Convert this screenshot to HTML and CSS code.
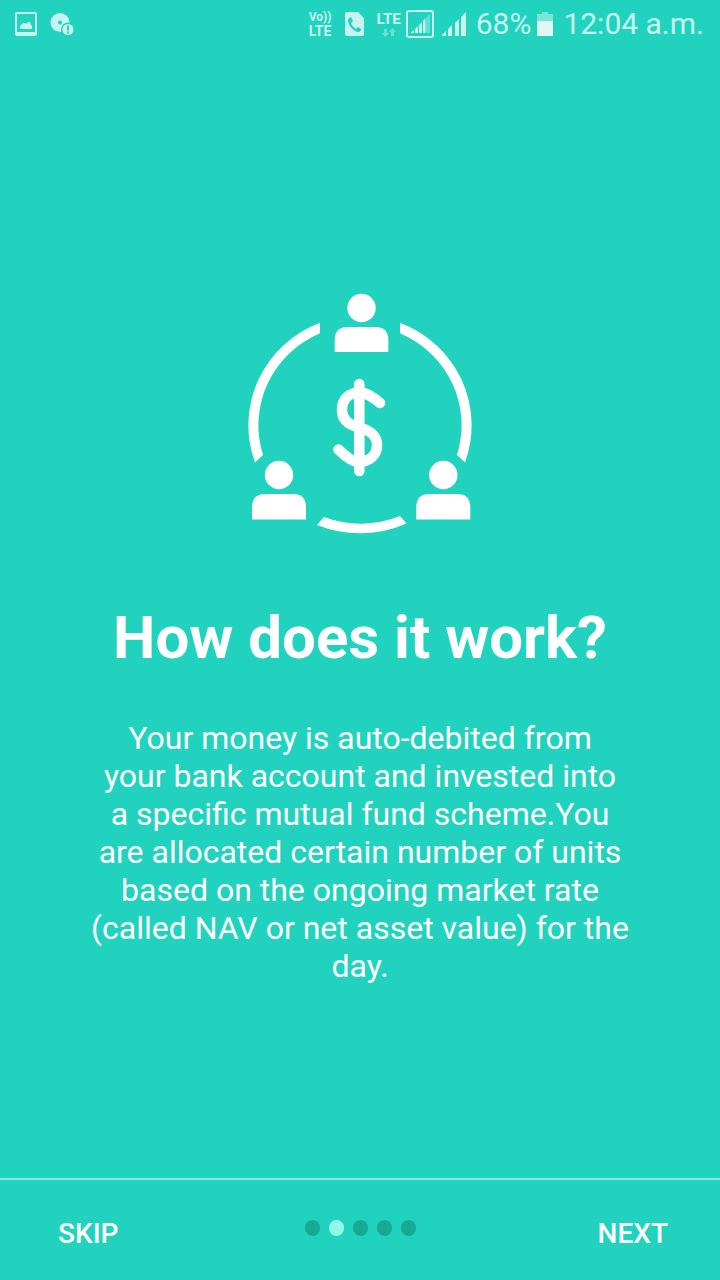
FILE: index.html
```html
<!DOCTYPE html>
<html lang="en">
<head>
<meta charset="utf-8">
<meta name="viewport" content="width=device-width, initial-scale=1">
<title>How does it work?</title>
<link rel="stylesheet" href="styles.css">
</head>
<body>
<div class="screen">
  <header class="status">
    <div class="status-group notices">
      <svg width="22" height="24" viewBox="0 0 22 24" aria-hidden="true"><path fill="currentColor" fill-rule="evenodd" d="M2 0h18a2 2 0 0 1 2 2v20a2 2 0 0 1-2 2H2a2 2 0 0 1-2-2V2a2 2 0 0 1 2-2zM2 2v18h18V2zM5 17v-3l3-3h2l1 1 2-2h2l1 3 1 1v3z"/></svg>
      <svg width="24" height="24" viewBox="0 0 24 24" aria-hidden="true"><circle cx="10" cy="10.500" r="9.500" fill="currentColor"/><circle class="hole" cx="10" cy="10.500" r="2"/><circle class="hole" cx="18" cy="17.500" r="7"/><circle cx="18" cy="17.500" r="5.500" fill="currentColor"/><path class="hole" d="M17 13.500h2v5h-2zM17 19.500h2v2h-2z"/></svg>
    </div>
    <div class="status-group">
      <div class="volte"><span>Vo))</span><span class="lte">LTE</span></div>
      <svg class="call" width="19" height="24" viewBox="0 0 19 24" aria-hidden="true"><path fill="currentColor" d="M2 0h11l6 6v16a2 2 0 0 1-2 2H2a2 2 0 0 1-2-2V2a2 2 0 0 1 2-2z"/><path class="hole" d="M4 6l2-1 2 4-2 2c1 3 3 5 5 6l2-2 3 2c0 2-1 3-3 3C8 19 3 13 3 8z"/></svg>
      <div class="data"><span class="lte">LTE</span>
        <svg width="14" height="9" viewBox="0 0 14 9" aria-hidden="true"><path fill="currentColor" d="M2 1h3v4h2L3.500 9 0 5h2zM9 8h3V4h2l-3.500-4L7 4h2z"/></svg>
      </div>
      <svg class="sim" width="28" height="28" viewBox="0 0 28 28" aria-hidden="true"><rect x="1" y="1" width="26" height="26" rx="2" fill="none" stroke="currentColor" stroke-width="2"/><path fill="currentColor" d="M5 23v-1l3-2v3zM9 23v-4l3-3v7zM13 23v-8l3-3v11zM17 23V11l2.500-3v15z"/><path fill="currentColor" opacity=".4" d="M20 23V8l4-4v19z"/></svg>
      <svg class="signal" width="24" height="24" viewBox="0 0 24 24" aria-hidden="true"><path fill="currentColor" d="M0 24v-1l4-4v5zM6 24v-7l4-4v11zM13 24V11l4-4v17zM19 24V5l5-5v24z"/></svg>
      <span class="battery-level">68%</span>
      <svg class="battery" width="16" height="24" viewBox="0 0 16 24" aria-hidden="true"><path fill="currentColor" opacity=".55" d="M0 2h5V0h6v2h5v7H0z"/><path fill="#dff8f4" d="M0 9h16v15H0z"/></svg>
      <time>12:04 a.m.</time>
    </div>
  </header>

  <main class="slide">
    <svg class="art" width="240" height="260" viewBox="240 280 240 260" role="img" aria-label="Investors sharing a fund">
      <g fill="currentColor">
        <path d="M320 322.700A112 110 0 0 0 255 462.500L263 455A101.500 100 0 0 1 320 333.300z"/>
        <path d="M400 322.700A112 110 0 0 1 465 462.500L457 455A101.500 100 0 0 0 400 333.300z"/>
        <path d="M317 525A112 108 0 0 0 406.500 523.500L400 516A101.500 98 0 0 1 324 517z"/>
        <circle cx="361.500" cy="308" r="14.200"/>
        <path d="M334.700 352V339.500Q335 327 347.500 327h28Q388 327 388.300 339.500V352z"/>
        <circle cx="279" cy="475" r="14.200"/>
        <path d="M252 519.500V507Q252.300 494 265 494h28Q305.700 494 306 507v12.500z"/>
        <circle cx="443.300" cy="475" r="14.200"/>
        <path d="M416.300 519.500V507Q416.600 494 429.300 494h28Q470 494 470.300 507v12.500z"/>
      </g>
      <path d="M359.300 384v87M380 403C374 398 367 392.500 359 392.500C348 393 342 400 342 410C342 420 349 425 359 427.500C370 430 377 436 377 445C377 455 370 461 359 462.500C351 461.500 344 455 338.500 449.500" fill="none" stroke="currentColor" stroke-width="10.500" stroke-linecap="round" stroke-linejoin="round"/>
    </svg>
    <h1>How does it work?</h1>
    <p>Your money is auto-debited from<br>your bank account and invested into<br>a specific mutual fund scheme.You<br>are allocated certain number of units<br>based on the ongoing market rate<br>(called NAV or net asset value) for the<br>day.</p>
  </main>

  <footer class="nav">
    <button type="button" class="skip">SKIP</button>
    <div class="dots" role="group" aria-label="Step 2 of 5">
      <span class="dot"></span><span class="dot active"></span><span class="dot"></span><span class="dot"></span><span class="dot"></span>
    </div>
    <button type="button" class="next">NEXT</button>
  </footer>
</div>
</body>
</html>
```

FILE: styles.css
```css
* { box-sizing: border-box; }
body {
  margin: 0;
  background: #21d3be;
  color: #fff;
  font-family: Roboto, "Liberation Sans", sans-serif;
}
svg { display: block; flex: none; }
.screen {
  min-height: 100vh;
  display: flex;
  flex-direction: column;
}
.status {
  display: flex;
  justify-content: space-between;
  align-items: center;
  height: 48px;
  padding: 0 16px 0 15px;
  color: #c6f4ee;
  font-size: 30px;
  line-height: 36px;
  white-space: nowrap;
}
.status-group { display: flex; align-items: center; }
.notices { gap: 13px; }
.volte, .data {
  display: flex;
  flex-direction: column;
  font-size: 12px;
  font-weight: 700;
  line-height: 14px;
}
.volte .lte { font-size: 14px; }
.data { align-items: center; }
.data .lte { font-size: 15px; }
.data svg { margin-top: 2px; opacity: .45; }
.call { margin: 0 13px; }
.hole { fill: #21d3be; }
.sim { margin: 0 8px 0 5px; }
.signal { margin-right: 10px; }
.battery { margin: 0 10px 0 6px; }
.slide {
  flex: 1;
  display: flex;
  flex-direction: column;
  align-items: center;
  padding: 232px 80px 40px;
  text-align: center;
}
h1 {
  margin: 63px 0 0;
  font-size: 60px;
  line-height: 70px;
  font-weight: 700;
}
p {
  margin: 46px 0 0;
  font-size: 32px;
  line-height: 38px;
}
.nav {
  display: grid;
  grid-template-columns: 1fr auto 1fr;
  align-items: start;
  height: 102px;
  padding: 36px 52px 0;
  border-top: 2px solid #86eadd;
}
button {
  justify-self: start;
  padding: 0;
  border: 0;
  background: none;
  color: inherit;
  font: 500 28px/36px Roboto, "Liberation Sans", sans-serif;
}
.skip { padding-left: 6px; }
.next { justify-self: end; }
.dots { display: flex; gap: 9px; padding-top: 4px; }
.dot {
  width: 15px;
  height: 16px;
  border-radius: 8px;
  background: #18a896;
}
.active { background: #92f9e9; }
```
